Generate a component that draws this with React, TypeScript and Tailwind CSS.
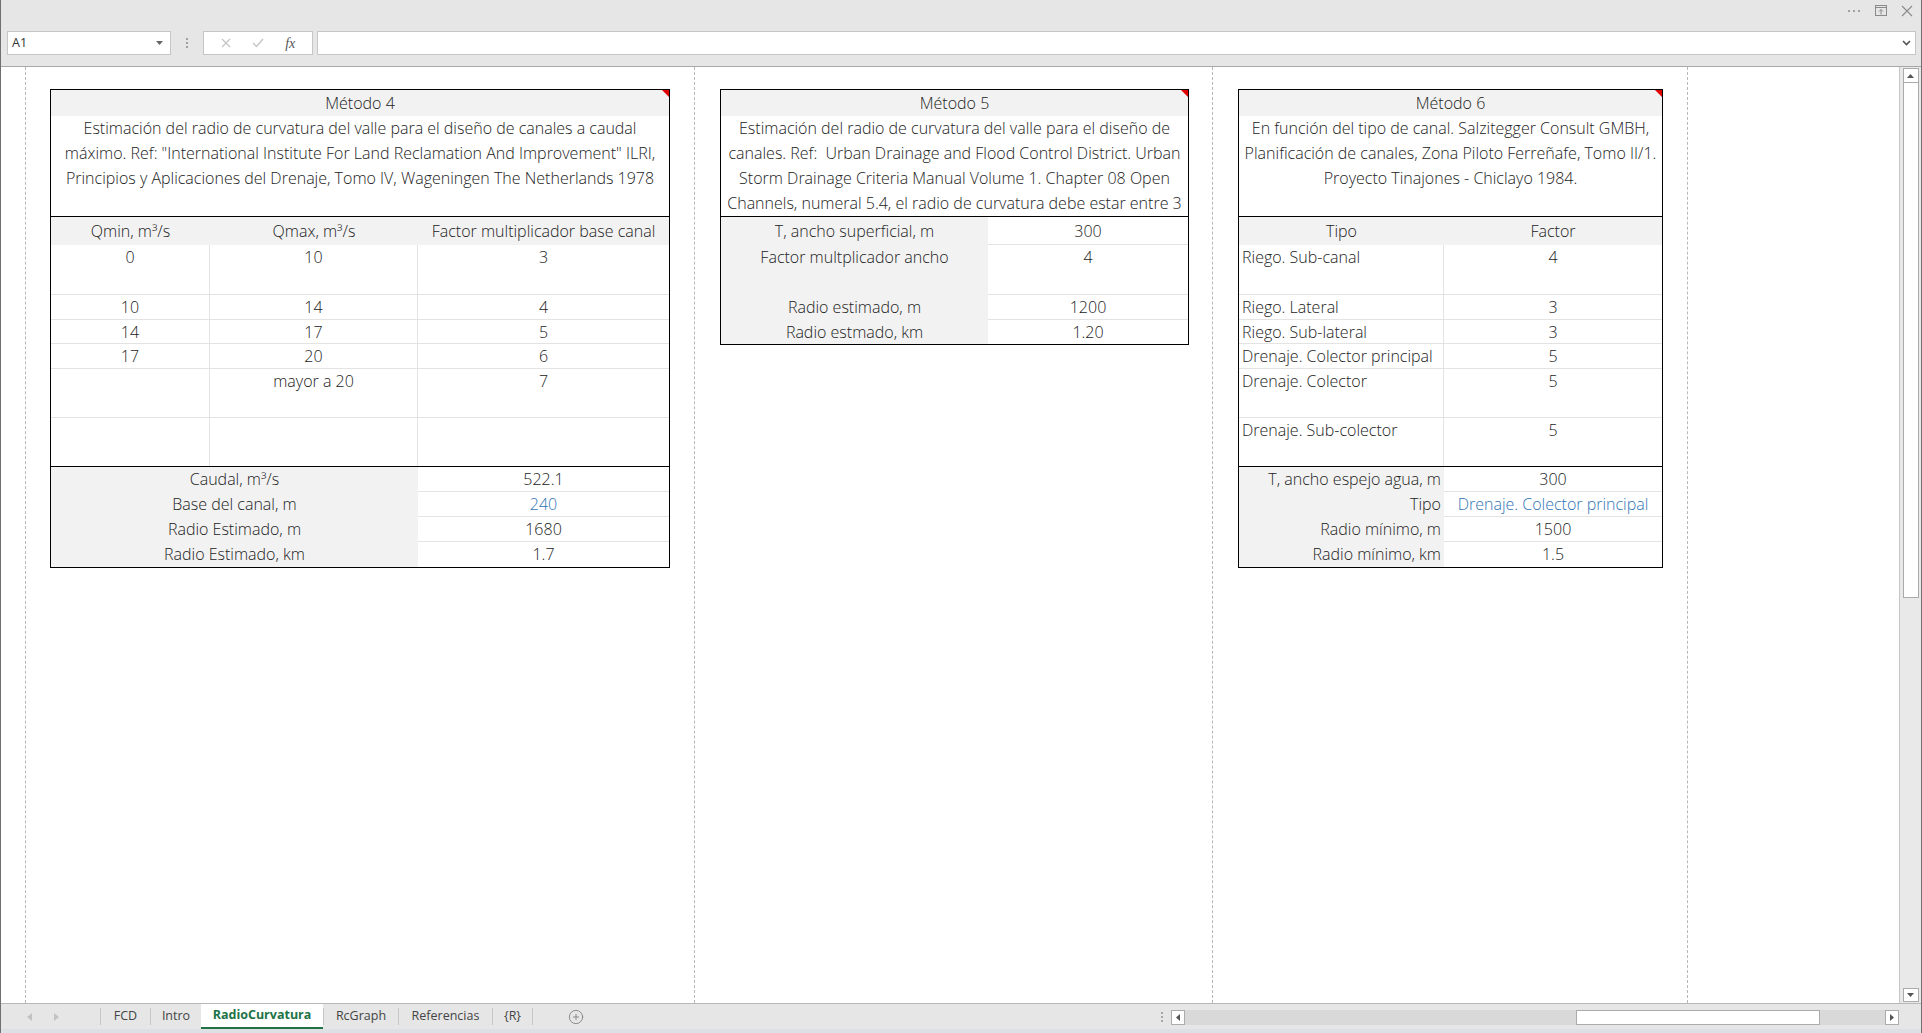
import { CirclePlus } from "lucide-react";

const grid = "border-[#e3e3e3]";

function Corner() {
  return (
    <span className="absolute right-0 top-0 h-0 w-0 border-l-[7px] border-t-[7px] border-l-transparent border-t-[#e00000]" />
  );
}

function Title({ text }: { text: string }) {
  return (
    <div className="relative h-[26px] bg-[#f2f2f2] text-center leading-[26px]">
      {text}
      <Corner />
    </div>
  );
}

function Desc({ lines }: { lines: string[] }) {
  return (
    <div className="h-[101px] overflow-hidden border-b border-black text-center leading-[25px]">
      {lines.map((l) => (
        <div key={l} className="whitespace-pre">
          {l}
        </div>
      ))}
    </div>
  );
}

const m4Rows = [
  { h: "h-[50px]", c: ["0", "10", "3"] },
  { h: "h-[25px]", c: ["10", "14", "4"] },
  { h: "h-[24px]", c: ["14", "17", "5"] },
  { h: "h-[25px]", c: ["17", "20", "6"] },
  { h: "h-[49px]", c: ["", "mayor a 20", "7"] },
  { h: "h-[49px]", c: ["", "", ""] },
];

const m4Results = [
  { label: "Caudal, m³/s", value: "522.1" },
  { label: "Base del canal, m", value: "240", blue: true },
  { label: "Radio Estimado, m", value: "1680" },
  { label: "Radio Estimado, km", value: "1.7" },
];

function Metodo4() {
  return (
    <div className="w-[620px] shrink-0 border border-black">
      <Title text="Método 4" />
      <Desc
        lines={[
          "Estimación del radio de curvatura del valle para el diseño de canales a caudal",
          'máximo. Ref: "International Institute For Land Reclamation And Improvement" ILRI,',
          "Principios y Aplicaciones del Drenaje, Tomo IV, Wageningen The Netherlands 1978",
        ]}
      />
      <div className="flex h-[28px] bg-[#f2f2f2] text-center leading-[28px]">
        <div className="w-[159px]">Qmin, m³/s</div>
        <div className="w-[208px]">Qmax, m³/s</div>
        <div className="flex-1">Factor multiplicador base canal</div>
      </div>
      {m4Rows.map((r, i) => (
        <div
          key={i}
          className={`flex ${r.h} border-b text-center leading-[25px] ${
            i === m4Rows.length - 1 ? "border-black" : grid
          }`}
        >
          <div className={`w-[159px] border-r ${grid}`}>{r.c[0]}</div>
          <div className={`w-[208px] border-r ${grid}`}>{r.c[1]}</div>
          <div className="flex-1">{r.c[2]}</div>
        </div>
      ))}
      {m4Results.map((r, i) => (
        <div key={r.label} className="flex h-[25px] text-center leading-[25px]">
          <div className="w-[367px] bg-[#f2f2f2]">{r.label}</div>
          <div
            className={`flex-1 ${i < m4Results.length - 1 ? `border-b ${grid}` : ""} ${
              r.blue ? "text-[#2f75b5]" : ""
            }`}
          >
            {r.value}
          </div>
        </div>
      ))}
    </div>
  );
}

const m5Rows = [
  { h: "h-[28px] leading-[28px]", label: "T, ancho superficial, m", value: "300" },
  { h: "h-[50px] leading-[25px]", label: "Factor multplicador ancho", value: "4" },
  { h: "h-[25px] leading-[25px]", label: "Radio estimado, m", value: "1200" },
  { h: "h-[24px] leading-[24px]", label: "Radio estmado, km", value: "1.20" },
];

function Metodo5() {
  return (
    <div className="w-[469px] shrink-0 self-start border border-black">
      <Title text="Método 5" />
      <Desc
        lines={[
          "Estimación del radio de curvatura del valle para el diseño de",
          "canales. Ref:  Urban Drainage and Flood Control District. Urban",
          "Storm Drainage Criteria Manual Volume 1. Chapter 08 Open",
          "Channels, numeral 5.4, el radio de curvatura debe estar entre 3",
        ]}
      />
      {m5Rows.map((r, i) => (
        <div key={r.label} className={`flex ${r.h} text-center`}>
          <div className="w-[267px] bg-[#f2f2f2]">{r.label}</div>
          <div className={`flex-1 ${i < m5Rows.length - 1 ? `border-b ${grid}` : ""}`}>{r.value}</div>
        </div>
      ))}
    </div>
  );
}

const m6Rows = [
  { h: "h-[50px]", tipo: "Riego. Sub-canal", f: "4" },
  { h: "h-[25px]", tipo: "Riego. Lateral", f: "3" },
  { h: "h-[24px]", tipo: "Riego. Sub-lateral", f: "3" },
  { h: "h-[25px]", tipo: "Drenaje. Colector principal", f: "5" },
  { h: "h-[49px]", tipo: "Drenaje. Colector", f: "5" },
  { h: "h-[49px]", tipo: "Drenaje. Sub-colector", f: "5" },
];

const m6Results = [
  { label: "T, ancho espejo agua, m", value: "300" },
  { label: "Tipo", value: "Drenaje. Colector principal", blue: true },
  { label: "Radio mínimo, m", value: "1500" },
  { label: "Radio mínimo, km", value: "1.5" },
];

function Metodo6() {
  return (
    <div className="w-[425px] shrink-0 border border-black">
      <Title text="Método 6" />
      <Desc
        lines={[
          "En función del tipo de canal. Salzitegger Consult GMBH,",
          "Planificación de canales, Zona Piloto Ferreñafe, Tomo II/1.",
          "Proyecto Tinajones - Chiclayo 1984.",
        ]}
      />
      <div className="flex h-[28px] bg-[#f2f2f2] text-center leading-[28px]">
        <div className="w-[205px]">Tipo</div>
        <div className="flex-1">Factor</div>
      </div>
      {m6Rows.map((r, i) => (
        <div
          key={r.tipo}
          className={`flex ${r.h} border-b leading-[25px] ${i === m6Rows.length - 1 ? "border-black" : grid}`}
        >
          <div className={`w-[205px] border-r pl-[3px] ${grid}`}>{r.tipo}</div>
          <div className="flex-1 text-center">{r.f}</div>
        </div>
      ))}
      {m6Results.map((r, i) => (
        <div key={r.label} className="flex h-[25px] leading-[25px]">
          <div className="w-[205px] bg-[#f2f2f2] pr-[3px] text-right">{r.label}</div>
          <div
            className={`flex-1 text-center ${i < m6Results.length - 1 ? `border-b ${grid}` : ""} ${
              r.blue ? "text-[#2f75b5]" : ""
            }`}
          >
            {r.value}
          </div>
        </div>
      ))}
    </div>
  );
}

function TriDown({ className = "" }: { className?: string }) {
  return (
    <svg width="7" height="4" viewBox="0 0 7 4" className={className}>
      <path d="M0 0h7L3.5 4z" fill="currentColor" />
    </svg>
  );
}

function TopChrome() {
  return (
    <div className="h-[67px] shrink-0 border-b border-[#a8a8a8] bg-[#e6e6e6]">
      <div className="flex h-[21px] items-center justify-end gap-[14px] pr-[8px] text-[#8a8a8a]">
        <svg width="14" height="4" viewBox="0 0 14 4">
          <circle cx="2" cy="2" r="1" fill="currentColor" />
          <circle cx="7" cy="2" r="1" fill="currentColor" />
          <circle cx="12" cy="2" r="1" fill="currentColor" />
        </svg>
        <svg width="12" height="11" viewBox="0 0 12 11" fill="none" stroke="currentColor">
          <rect x="0.5" y="0.5" width="11" height="10" />
          <path d="M0.5 2.5h11M6 9.5V4.5M4 6.5l2-2 2 2" />
        </svg>
        <svg width="12" height="12" viewBox="0 0 12 12" stroke="currentColor" strokeWidth="1.1">
          <path d="M1 1l10 10M11 1L1 11" />
        </svg>
      </div>
      <div className="mt-[10px] flex h-[24px] items-stretch pl-[6px] pr-[5px] text-[12.5px] text-[#333]">
        <div className="flex w-[164px] items-center justify-between border border-[#c6c6c6] bg-white pl-[4px] pr-[7px]">
          <span>A1</span>
          <TriDown className="text-[#666]" />
        </div>
        <div className="flex w-[32px] items-center justify-center">
          <svg width="2" height="10" viewBox="0 0 2 10">
            <rect y="0" width="2" height="2" fill="#a0a0a0" />
            <rect y="4" width="2" height="2" fill="#a0a0a0" />
            <rect y="8" width="2" height="2" fill="#a0a0a0" />
          </svg>
        </div>
        <div className="flex w-[110px] items-center justify-around border border-[#c6c6c6] bg-white px-[6px]">
          <svg width="10" height="10" viewBox="0 0 10 10" stroke="#c4c4c4" strokeWidth="1.2">
            <path d="M1 1l8 8M9 1L1 9" />
          </svg>
          <svg width="12" height="10" viewBox="0 0 12 10" fill="none" stroke="#c4c4c4" strokeWidth="1.3">
            <path d="M1 5l3.5 3.5L11 1" />
          </svg>
          <span className="font-['Liberation_Serif',serif] text-[14px] italic text-[#555]">fx</span>
        </div>
        <div className="ml-[4px] flex flex-1 items-center justify-end border border-[#c6c6c6] bg-white pr-[4px]">
          <svg width="9" height="6" viewBox="0 0 9 6" fill="none" stroke="#555" strokeWidth="1.6">
            <path d="M1 1l3.5 3.5L8 1" />
          </svg>
        </div>
      </div>
    </div>
  );
}

function Sheet() {
  return (
    <div className="flex h-[936px] shrink-0">
      <div className="relative flex-1 overflow-hidden bg-white">
        <div className="absolute bottom-0 left-[24px] top-0 border-l border-dashed border-[#b8b8b8]" />
        <div className="absolute bottom-0 left-[693px] top-0 border-l border-dashed border-[#b8b8b8]" />
        <div className="absolute bottom-0 left-[1211px] top-0 border-l border-dashed border-[#b8b8b8]" />
        <div className="absolute bottom-0 left-[1686px] top-0 border-l border-dashed border-[#b8b8b8]" />
        <div className="relative flex items-start gap-[50px] pl-[49px] pt-[22px] font-['Open_Sans','Noto_Sans',sans-serif] text-[16px] font-light text-[#222]">
          <Metodo4 />
          <Metodo5 />
          <div className="-ml-[1px]">
            <Metodo6 />
          </div>
        </div>
      </div>
      <div className="flex w-[22px] flex-col items-center border-l border-[#c6c6c6] bg-[#e9e9e9]">
        <div className="mt-[1px] flex h-[15px] w-[16px] items-center justify-center border border-[#ababab] bg-white">
          <TriDown className="rotate-180 text-[#555]" />
        </div>
        <div className="h-[515px] w-[16px] border border-t-0 border-[#ababab] bg-white" />
        <div className="flex-1" />
        <div className="mb-[1px] flex h-[14px] w-[16px] items-center justify-center border border-[#ababab] bg-white">
          <TriDown className="text-[#555]" />
        </div>
      </div>
    </div>
  );
}

const tabs = ["FCD", "Intro", "RadioCurvatura", "RcGraph", "Referencias", "{R}"];
const tabW: Record<string, string> = {
  FCD: "w-[50px]",
  Intro: "w-[51px]",
  RadioCurvatura: "w-[122px]",
  RcGraph: "w-[75px]",
  Referencias: "w-[94px]",
  "{R}": "w-[41px]",
};

function TabBar() {
  return (
    <div className="flex h-[30px] shrink-0 flex-col border-t border-[#b8b8b8] bg-[#e6e6e6] font-['Open_Sans','Noto_Sans',sans-serif] text-[12.5px] text-[#444]">
      <div className="flex h-[25px] items-stretch">
        <div className="flex w-[99px] items-center gap-[22px] pl-[26px] text-[#c2c2c2]">
          <svg width="5" height="8" viewBox="0 0 5 8">
            <path d="M5 0v8L0 4z" fill="currentColor" />
          </svg>
          <svg width="5" height="8" viewBox="0 0 5 8">
            <path d="M0 0v8l5-4z" fill="currentColor" />
          </svg>
        </div>
        {tabs.map((t) =>
          t === "RadioCurvatura" ? (
            <div
              key={t}
              className={`${tabW[t]} flex items-center justify-center border-b-2 border-[#217346] bg-white font-bold text-[#217346]`}
            >
              {t}
            </div>
          ) : (
            <div key={t} className={`${tabW[t]} my-[4px] flex items-center justify-center border-l border-[#c6c6c6] ${t === "{R}" ? "border-r" : ""}`}>
              {t}
            </div>
          ),
        )}
        <div className="flex w-[84px] items-center justify-center pl-[1px]">
          <CirclePlus size={16} strokeWidth={1.2} className="text-[#777]" />
        </div>
        <div className="flex-1" />
        <div className="flex w-[18px] items-center justify-center">
          <svg width="2" height="10" viewBox="0 0 2 10">
            <rect y="0" width="2" height="2" fill="#a8a8a8" />
            <rect y="4" width="2" height="2" fill="#a8a8a8" />
            <rect y="8" width="2" height="2" fill="#a8a8a8" />
          </svg>
        </div>
        <div className="mr-[22px] mt-[6px] flex h-[15px] w-[728px] items-stretch bg-[#d9d9d9]">
          <div className="flex w-[14px] items-center justify-center border border-[#ababab] bg-white">
            <svg width="4" height="7" viewBox="0 0 4 7">
              <path d="M4 0v7L0 3.5z" fill="#555" />
            </svg>
          </div>
          <div className="w-[391px]" />
          <div className="w-[244px] border border-[#ababab] bg-white" />
          <div className="flex-1" />
          <div className="flex w-[14px] items-center justify-center border border-[#ababab] bg-white">
            <svg width="4" height="7" viewBox="0 0 4 7">
              <path d="M0 0v7l4-3.5z" fill="#555" />
            </svg>
          </div>
        </div>
      </div>
      <div className="flex-1 bg-[#dde1e6]" />
    </div>
  );
}

export default function App() {
  return (
    <div className="flex h-[1033px] w-full flex-col overflow-hidden border-x border-[#707070] font-['Open_Sans','Noto_Sans',sans-serif]">
      <TopChrome />
      <Sheet />
      <TabBar />
    </div>
  );
}
